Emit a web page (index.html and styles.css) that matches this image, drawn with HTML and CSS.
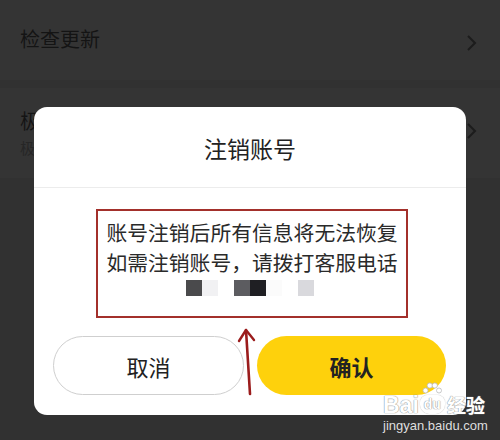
FILE: index.html
```html
<!DOCTYPE html>
<html lang="zh-CN">
<head>
<meta charset="utf-8">
<title>注销账号</title>
<link rel="stylesheet" href="styles.css">
</head>
<body>
<div class="page">
  <div class="list">
    <div class="row row-first">
      <span class="row-title">检查更新</span>
      <svg class="chev" width="12" height="18" viewBox="0 0 12 18"><path d="M2 2 L9 9 L2 16" fill="none" stroke="#1c1c1c" stroke-width="2"/></svg>
    </div>
    <div class="row row-second">
      <div class="row-text">
        <span class="row-title">极速模式</span>
        <span class="row-sub">极速模式下部分功能不可用</span>
      </div>
      <svg class="chev chev-2" width="12" height="18" viewBox="0 0 12 18"><path d="M2 2 L9 9 L2 16" fill="none" stroke="#1c1c1c" stroke-width="2"/></svg>
    </div>
  </div>

  <div class="dialog">
    <div class="dialog-head">注销账号</div>
    <div class="dialog-body">
      <div class="mark-box">
        <p class="msg">账号注销后所有信息将无法恢复</p>
        <p class="msg">如需注销账号，请拨打客服电话</p>
        <div class="phone">
          <span class="px p1"></span><span class="px p2"></span><span class="gap"></span><span class="px p3"></span><span class="px p4"></span><span class="px p5"></span><span class="gap"></span><span class="px p6"></span>
        </div>
      </div>
    </div>
    <div class="dialog-actions">
      <button class="btn btn-cancel">取消</button>
      <button class="btn btn-ok">确认</button>
    </div>
  </div>

  <svg class="arrow" width="30" height="80" viewBox="0 0 30 80">
    <path d="M19 68 L15 4" fill="none" stroke="#9b1c1c" stroke-width="2.6" stroke-linecap="round"/>
    <path d="M8 15 L15 4 L23 14" fill="none" stroke="#9b1c1c" stroke-width="2.4" stroke-linecap="round" stroke-linejoin="round"/>
  </svg>

  <div class="watermark">
    <div class="wm-logo">
      <span class="wm-bai">Bai</span>
      <span class="wm-du">du
        <svg class="paw" width="20" height="13" viewBox="0 0 20 13">
          <circle cx="3.5" cy="8.5" r="2.5" fill="#fff" stroke="#bbb" stroke-width="0.8"/>
          <circle cx="7.8" cy="3.5" r="2.6" fill="#fff" stroke="#bbb" stroke-width="0.8"/>
          <circle cx="12.8" cy="3.5" r="2.6" fill="#fff" stroke="#bbb" stroke-width="0.8"/>
          <circle cx="17" cy="8.5" r="2.5" fill="#fff" stroke="#bbb" stroke-width="0.8"/>
        </svg>
      </span>
      <span class="wm-jy">经验</span>
    </div>
    <div class="wm-url">jingyan.baidu.com</div>
  </div>
</div>
</body>
</html>
```

FILE: styles.css
```css
* { box-sizing: border-box; }
html, body {
  margin: 0;
  padding: 0;
  background: #323232;
  font-family: "Noto Sans CJK SC", "Noto Sans", sans-serif;
}
.page {
  position: relative;
  width: 500px;
  height: 440px;
  overflow: hidden;
  background: #313131;
}
.list {
  display: flex;
  flex-direction: column;
  gap: 8px;
}
.row {
  display: flex;
  align-items: center;
  justify-content: space-between;
  padding: 0 22px 0 20px;
  background: #343434;
}
.row-first {
  height: 80px;
  padding-bottom: 2px;
}
.row-second {
  height: 90px;
}
.row-text {
  display: flex;
  flex-direction: column;
  gap: 2px;
}
.row-title {
  font-size: 20px;
  line-height: 28px;
  color: #141414;
}
.row-sub {
  font-size: 15px;
  line-height: 22px;
  color: #262626;
}
.chev { margin-top: 8px; }
.chev-2 { margin-top: -4px; }

.dialog {
  position: absolute;
  left: 34px;
  top: 107px;
  width: 432px;
  height: 308px;
  background: #ffffff;
  border-radius: 13px;
  display: flex;
  flex-direction: column;
}
.dialog-head {
  height: 81px;
  display: flex;
  align-items: center;
  justify-content: center;
  font-size: 23px;
  color: #222;
  border-bottom: 1px solid #ececec;
  padding-top: 2px;
}
.dialog-body {
  display: flex;
  justify-content: center;
  padding: 21px 0 0 4px;
}
.mark-box {
  width: 312px;
  height: 109px;
  border: 2px solid #a3302b;
  display: flex;
  flex-direction: column;
  align-items: center;
  padding-top: 6px;
}
.msg {
  margin: 0;
  font-size: 20.8px;
  line-height: 30px;
  color: #2a2a2a;
  white-space: nowrap;
}
.phone {
  display: flex;
  margin-top: 3px;
  height: 16px;
  margin-left: -4px;
}
.px { width: 16px; height: 16px; display: block; }
.gap { width: 16px; }
.p1 { background: #4a4a4c; }
.p2 { background: #f1f1f3; }
.p3 { background: #5c5c60; }
.p4 { background: #1f1f23; }
.p5 { background: #fbfbfb; }
.p6 { background: #d9d9dd; }

.dialog-actions {
  display: flex;
  gap: 13px;
  padding: 0 20px 0 19px;
  margin-top: auto;
  margin-bottom: 20px;
}
.btn {
  flex: 1;
  height: 59px;
  border-radius: 30px;
  font-family: "Noto Sans CJK SC", "Noto Sans", sans-serif;
  font-size: 22px;
  color: #222;
  display: flex;
  align-items: center;
  justify-content: center;
  padding: 0;
}
.btn-cancel {
  background: #fff;
  border: 1px solid #cfcfcf;
}
.btn-ok {
  background: #fed10c;
  border: none;
  font-weight: 700;
}

.arrow {
  position: absolute;
  left: 231px;
  top: 326px;
}

.watermark {
  position: absolute;
  left: 383px;
  top: 384px;
  display: flex;
  flex-direction: column;
  align-items: flex-start;
}
.wm-logo {
  display: flex;
  align-items: flex-end;
  height: 32px;
  color: #ffffff;
  font-family: "Liberation Sans", Arial, sans-serif;
  font-weight: 700;
  text-shadow: 0 0 1px #8a8a8a, 0 0 1px #8a8a8a;
}
.wm-bai { font-size: 23px; line-height: 22px; }
.wm-du {
  position: relative;
  font-size: 14px;
  line-height: 15px;
  margin-left: 1px;
  padding: 0 2px;
  border: 2px solid #fff;
  box-shadow: 0 0 1px #8a8a8a;
  border-radius: 8px 8px 10px 10px;
  margin-bottom: 2px;
}
.paw {
  position: absolute;
  left: 0;
  top: -15px;
}
.wm-jy {
  font-family: "Noto Sans CJK SC", sans-serif;
  font-size: 19px;
  line-height: 22px;
  margin-left: 2px;
  font-weight: 700;
}
.wm-url {
  font-family: "Liberation Sans", Arial, sans-serif;
  font-size: 13px;
  line-height: 16px;
  color: #dedede;
  margin-top: 2px;
}
```
